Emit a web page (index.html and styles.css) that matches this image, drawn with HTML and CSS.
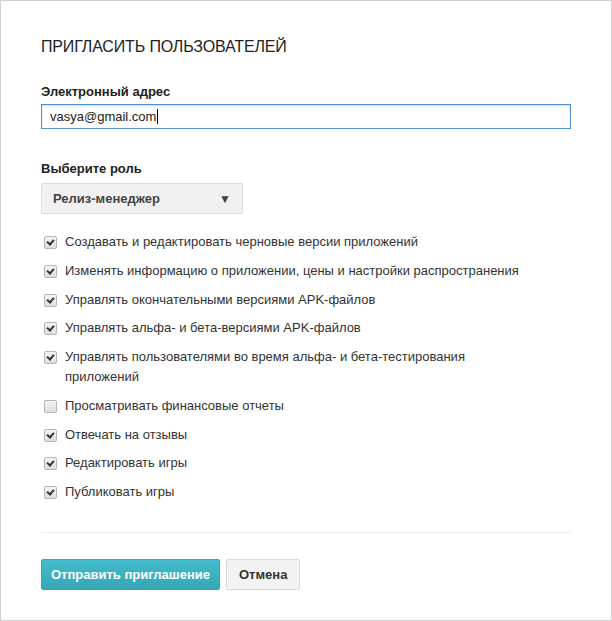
FILE: index.html
```html
<!DOCTYPE html>
<html lang="ru">
<head>
<meta charset="utf-8">
<link rel="stylesheet" href="styles.css">
</head>
<body>
<div class="dialog">
  <h1 class="title">ПРИГЛАСИТЬ ПОЛЬЗОВАТЕЛЕЙ</h1>
  <div class="field">
    <label class="label">Электронный адрес</label>
    <div class="input"><span>vasya@gmail.com</span><span class="caret"></span></div>
  </div>
  <div class="field role">
    <label class="label">Выберите роль</label>
    <div class="select"><span>Релиз-менеджер</span><span class="arrow">▼</span></div>
  </div>
  <ul class="perms">
    <li><span class="cb on"></span><span class="txt">Создавать и редактировать черновые версии приложений</span></li>
    <li><span class="cb on"></span><span class="txt">Изменять информацию о приложении, цены и настройки распространения</span></li>
    <li><span class="cb on"></span><span class="txt">Управлять окончательными версиями APK-файлов</span></li>
    <li><span class="cb on"></span><span class="txt">Управлять альфа- и бета-версиями APK-файлов</span></li>
    <li><span class="cb on"></span><span class="txt">Управлять пользователями во время альфа- и бета-тестирования приложений</span></li>
    <li><span class="cb"></span><span class="txt">Просматривать финансовые отчеты</span></li>
    <li><span class="cb on"></span><span class="txt">Отвечать на отзывы</span></li>
    <li><span class="cb on"></span><span class="txt">Редактировать игры</span></li>
    <li><span class="cb on"></span><span class="txt">Публиковать игры</span></li>
  </ul>
  <div class="divider"></div>
  <div class="actions">
    <button class="btn primary">Отправить приглашение</button>
    <button class="btn">Отмена</button>
  </div>
</div>
</body>
</html>
```
FILE: styles.css
```css
html, body {
  margin: 0;
  padding: 0;
  background: #fff;
}
.dialog {
  box-sizing: border-box;
  width: 612px;
  height: 621px;
  border: 1px solid #cfcfcf;
  padding: 36px 40px 0 40px;
  font-family: "Liberation Sans", Arial, sans-serif;
  color: #333;
  font-size: 13px;
}
.title {
  margin: 0;
  font-size: 16px;
  font-weight: normal;
  line-height: 20px;
  color: #222;
  letter-spacing: -0.15px;
}
.field {
  margin-top: 27px;
}
.label {
  display: block;
  font-weight: bold;
  line-height: 16px;
  color: #222;
}
.input {
  box-sizing: border-box;
  margin-top: 4px;
  width: 530px;
  height: 25px;
  border: 1px solid #4d90d6;
  box-shadow: inset 0 1px 2px rgba(0,0,0,0.15);
  padding: 0 8px;
  display: flex;
  align-items: center;
  font-size: 13px;
  color: #222;
}
.caret {
  display: inline-block;
  width: 1px;
  height: 15px;
  background: #000;
  margin-left: 1px;
}
.role {
  margin-top: 32px;
}
.select {
  box-sizing: border-box;
  margin-top: 6px;
  width: 202px;
  height: 31px;
  border: 1px solid #dcdcdc;
  border-radius: 2px;
  background: #f1f1f1;
  display: flex;
  align-items: center;
  justify-content: space-between;
  padding: 0 11px 0 11px;
  font-weight: bold;
  color: #444;
}
.arrow {
  font-size: 12px;
  color: #444;
}
.perms {
  list-style: none;
  margin: 18px 0 0 0;
  padding: 0;
  display: flex;
  flex-direction: column;
  gap: 8.75px;
}
.perms li {
  display: flex;
  align-items: flex-start;
  line-height: 20px;
}
.txt {
  max-width: 462px;
}
.cb {
  flex: none;
  box-sizing: border-box;
  width: 13px;
  height: 13px;
  margin: 4px 8px 0 3px;
  border: 1px solid #b5b5b5;
  border-radius: 2px;
  background: linear-gradient(#f4f4f4, #dedede);
  position: relative;
}
.cb.on::after {
  content: "";
  position: absolute;
  left: 3px;
  top: 1px;
  width: 3px;
  height: 5px;
  border: solid #333;
  border-width: 0 2px 2px 0;
  transform: rotate(40deg);
}
.divider {
  margin-top: 30px;
  height: 1px;
  background: #ebebeb;
  width: 530px;
}
.actions {
  margin-top: 26px;
  display: flex;
  gap: 6px;
}
.btn {
  font-family: "Liberation Sans", Arial, sans-serif;
  font-size: 13px;
  font-weight: bold;
  height: 31px;
  padding: 0 12px;
  white-space: nowrap;
  border: 1px solid #d9d9d9;
  border-radius: 2px;
  background: #f3f3f3;
  color: #333;
}
.btn.primary {
  padding: 0 9px;
  border-color: #36a5b3;
  background: linear-gradient(#43bccb, #36a7b5);
  color: #fff;
}
```
